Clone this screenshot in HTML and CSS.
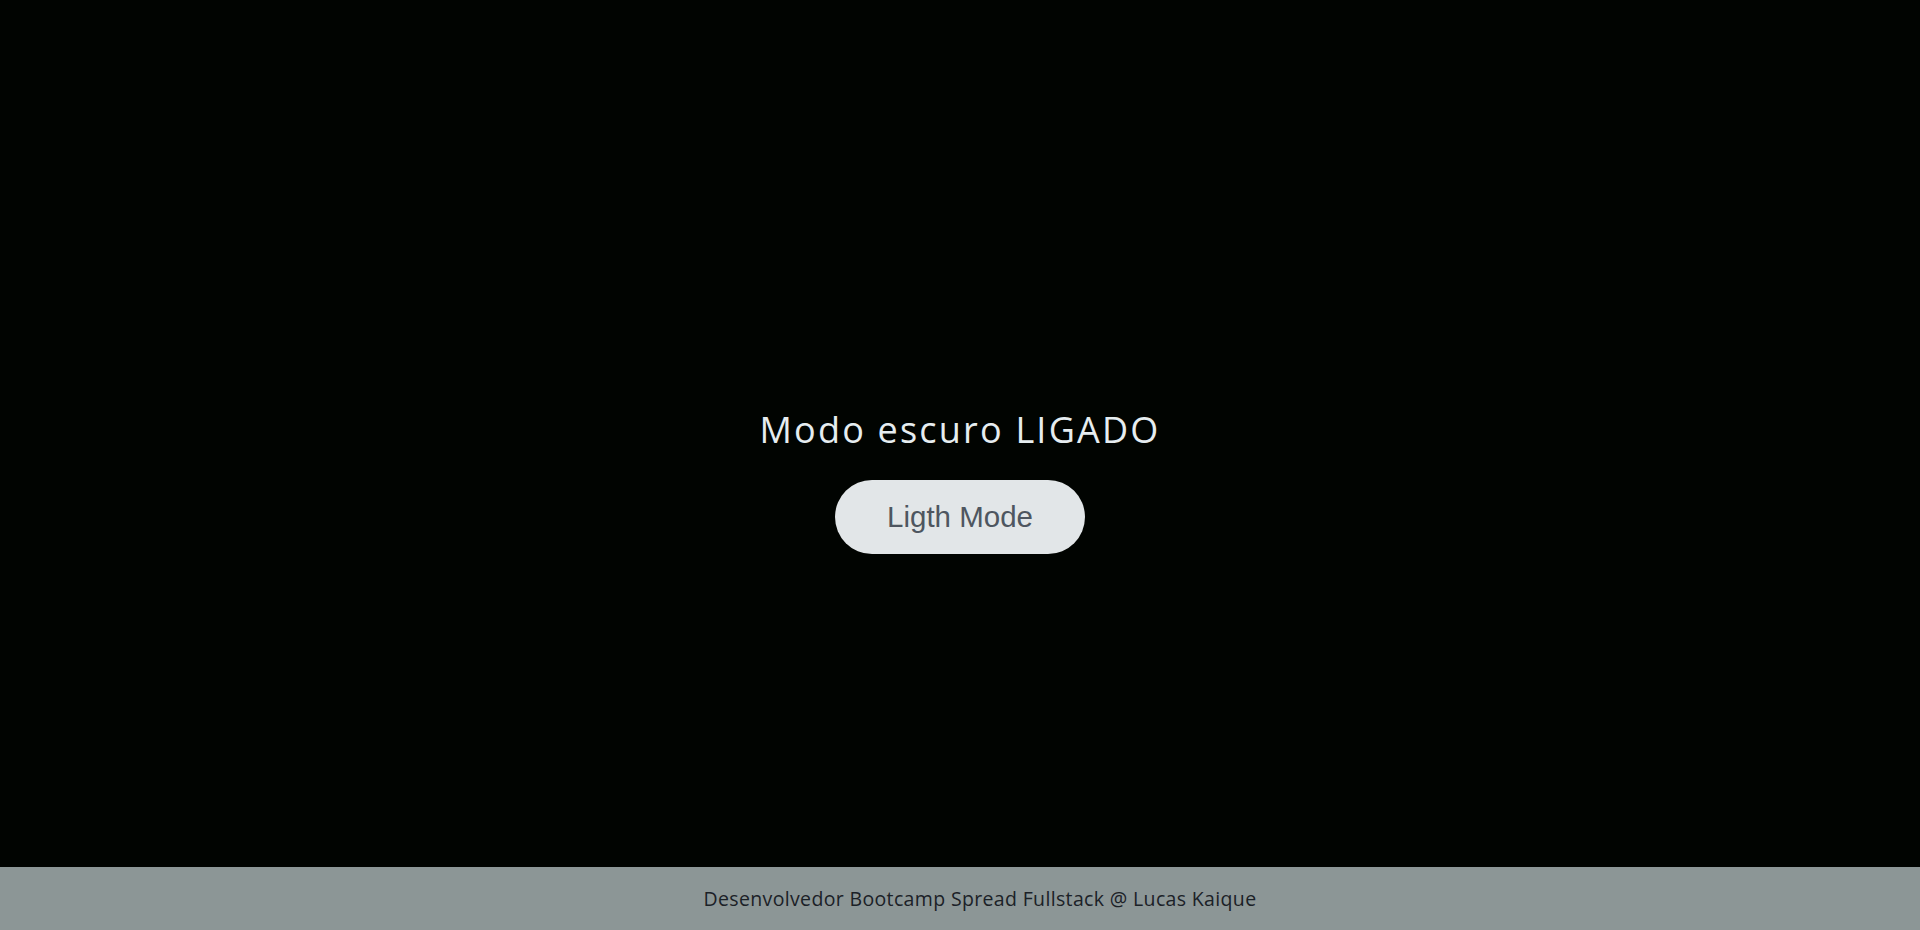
FILE: index.html
```html
<!DOCTYPE html>
<html lang="pt-BR">
<head>
<meta charset="utf-8">
<title>Modo escuro</title>
<link rel="stylesheet" href="styles.css">
</head>
<body>
<div class="page">
  <main class="main">
    <h1 class="title">Modo escuro LIGADO</h1>
    <button class="toggle" type="button">Ligth Mode</button>
  </main>
  <footer class="footer">
    <p class="footer-text">Desenvolvedor Bootcamp Spread Fullstack @ Lucas Kaique</p>
  </footer>
</div>
</body>
</html>
```
FILE: styles.css
```css
* { box-sizing: border-box; }
html, body { margin: 0; padding: 0; height: 100%; }
body {
  background: #010401;
  font-family: "Open Sans", "Noto Sans", sans-serif;
}
.page {
  display: flex;
  flex-direction: column;
  height: 930px;
}
.main {
  flex: 1;
  display: flex;
  flex-direction: column;
  align-items: center;
  justify-content: center;
  padding-top: 95px;
}
.title {
  margin: 0 0 28px;
  font-size: 36px;
  line-height: 44px;
  font-weight: 500;
  letter-spacing: 2.2px;
  color: #e6edf0;
}
.toggle {
  width: 250px;
  height: 74px;
  border: none;
  border-radius: 37px;
  background: #e2e6e8;
  color: #4e5660;
  font-family: "Liberation Sans", Arial, sans-serif;
  font-size: 29.5px;
  cursor: pointer;
}
.footer {
  height: 63px;
  background: #8c9696;
  display: flex;
  align-items: center;
  justify-content: center;
  padding-left: 40px;
}
.footer-text {
  margin: 0;
  font-size: 19.5px;
  letter-spacing: 0.35px;
  color: #1b2127;
}
```
